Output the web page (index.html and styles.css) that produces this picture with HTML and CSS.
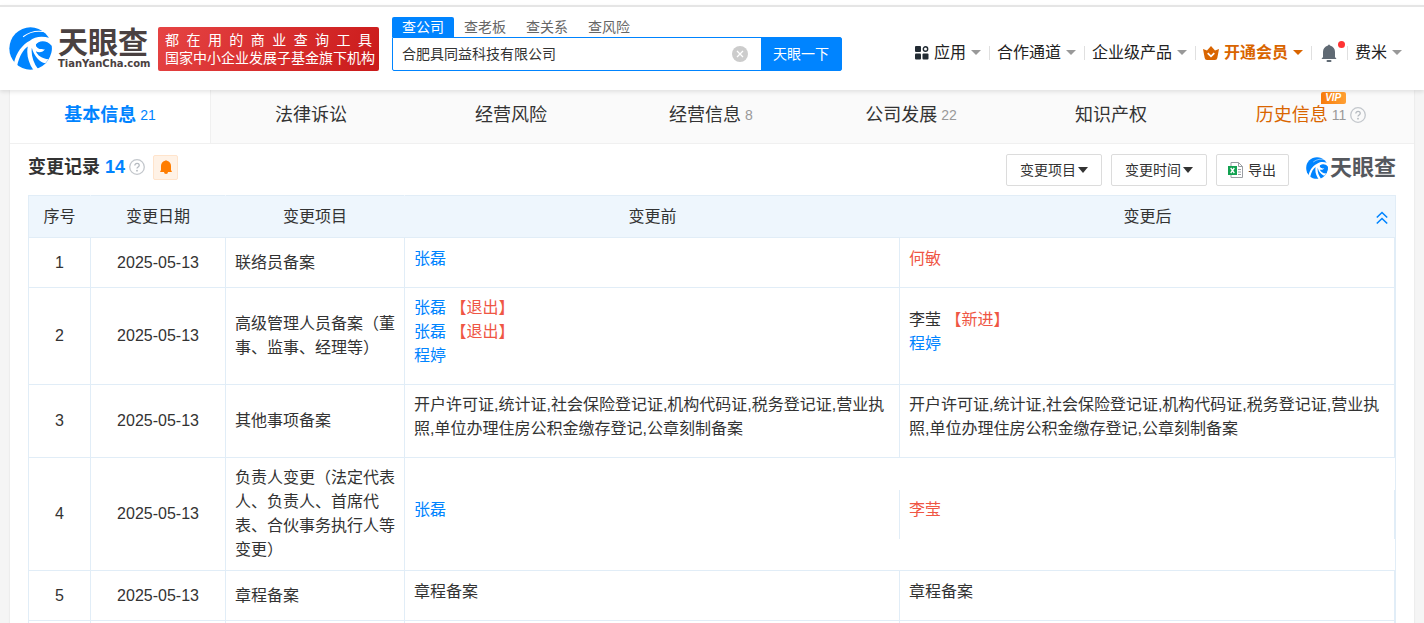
FILE: index.html
```html
<!DOCTYPE html>
<html lang="zh-CN">
<head>
    <meta charset="UTF-8">
    <title>天眼查</title>
    <link rel="stylesheet" href="styles.css">
</head>
<body>

<svg class="sprite" width="0" height="0" aria-hidden="true">
    <symbol id="swirl" viewBox="12 14 128 128">
        <circle cx="76" cy="78" r="63" fill="#0084ff"/>
        <path d="M54 43Q85 19 126 30" fill="none" stroke="#fff" stroke-width="3"/>
        <path d="M142 38L133 47C112 40 88 42 74 55C52 66 34 90 27 120L36 130C43 100 55 80 68 72C63 96 70 122 86 144L99 140C84 120 77 96 80 76C86 100 104 120 120 122L130 110C110 108 96 98 92 86C102 92 114 88 119 80C106 81 94 78 92 67C100 56 122 55 142 74Z" fill="#fff"/>
        <path d="M92 67C98 54 124 50 139 70Q140 84 137 92C126 90 119 88 119 80C106 81 94 78 92 67Z" fill="#0084ff"/>
    </symbol>
    <symbol id="help" viewBox="0 0 16 16">
        <circle cx="8" cy="8" r="7.3" fill="none" stroke="#c3c7cc" stroke-width="1.3"/>
        <path d="M5.8 6.5C5.8 3.6 10.3 3.7 10.2 6.4C10.2 7.9 8 8 8 9.6" fill="none" stroke="#b4b9bf" stroke-width="1.3"/>
        <circle cx="8" cy="11.7" r=".9" fill="#b4b9bf"/>
    </symbol>
</svg>

<header class="header">
    <a class="logo" href="#">
        <svg class="logo_mark"><use href="#swirl"/></svg>
        <span class="logo_text">
            <span class="logo_name">天眼查</span>
            <span class="logo_domain">TianYanCha.com</span>
        </span>
    </a>
    <div class="slogan">
        <div class="slogan_line">都 在 用 的 商 业 查 询 工 具</div>
        <div class="slogan_line">国家中小企业发展子基金旗下机构</div>
    </div>

    <form class="search">
        <div class="search-tabs">
            <button type="button" class="search-tabs_button active">查公司</button>
            <button type="button" class="search-tabs_button">查老板</button>
            <button type="button" class="search-tabs_button">查关系</button>
            <button type="button" class="search-tabs_button">查风险</button>
        </div>
        <div class="search-box">
            <input class="search-box_input" type="text" aria-label="搜索" value="合肥具同益科技有限公司">
            <button type="button" class="search-box_clear" aria-label="清空">
                <svg width="16" height="16" viewBox="0 0 16 16"><circle cx="8" cy="8" r="8" fill="#ccc"/><path d="M5 5l6 6M11 5l-6 6" stroke="#fff" stroke-width="1.3"/></svg>
            </button>
            <button type="submit" class="search-box_submit">天眼一下</button>
        </div>
    </form>

    <nav class="nav">
        <button class="nav_item">
            <svg width="14" height="14" viewBox="0 0 14 14" fill="#222b33"><rect x="0" y="0" width="6" height="6" rx="1"/><circle cx="10.5" cy="3" r="2.2" fill="none" stroke="#222b33" stroke-width="1.4"/><rect x="0" y="7.5" width="6" height="6" rx="1"/><rect x="7.5" y="7.5" width="6" height="6" rx="1"/></svg>
            应用<i class="caret"></i>
        </button>
        <button class="nav_item">合作通道<i class="caret"></i></button>
        <button class="nav_item">企业级产品<i class="caret"></i></button>
        <button class="nav_item nav_item-vip">
            <svg width="16" height="14" viewBox="0 0 16 14"><path d="M0 3L4 4.5L8 0L12 4.5L16 3L14.3 12Q14 14 12 14H4Q2 14 1.7 12Z" fill="#d96500"/><path d="M4.7 7.2L8 10.3L11.3 7.2" fill="none" stroke="#fff" stroke-width="1.8"/></svg>
            开通会员<i class="caret"></i>
        </button>
        <button class="nav_item nav_item-bell" aria-label="消息">
            <svg width="16" height="18" viewBox="0 0 16 18" fill="#606a74"><path d="M7 1.5Q8-.5 9 1.5Q14 3 14 8V13L15.5 15H.5L2 13V8Q2 3 7 1.5Z"/><rect x="5.5" y="16" width="5" height="2" rx="1"/></svg>
            <span class="dot"></span>
        </button>
        <button class="nav_item">费米<i class="caret"></i></button>
    </nav>
</header>

<main class="page">
    <nav class="tabs">
        <a class="tabs_item active" href="#">基本信息<span class="tabs_count">21</span></a>
        <a class="tabs_item" href="#">法律诉讼</a>
        <a class="tabs_item" href="#">经营风险</a>
        <a class="tabs_item" href="#">经营信息<span class="tabs_count">8</span></a>
        <a class="tabs_item" href="#">公司发展<span class="tabs_count">22</span></a>
        <a class="tabs_item" href="#">知识产权</a>
        <a class="tabs_item tabs_item-history" href="#">
            <span class="tabs_label">历史信息<span class="vip">VIP</span></span>
            <span class="tabs_count">11</span>
            <svg class="help"><use href="#help"/></svg>
        </a>
    </nav>

    <section class="records">
        <div class="toolbar">
            <div class="toolbar_heading">
                <h2 class="toolbar_title">变更记录 <span class="toolbar_count">14</span></h2>
                <svg class="help"><use href="#help"/></svg>
                <button class="remind" aria-label="订阅">
                    <svg width="12" height="14" viewBox="0 0 12 14" fill="#ff7d00"><path d="M5 .8Q6-.4 7 .8Q11 2 11 6V10L12 12H0L1 10V6Q1 2 5 .8Z"/><path d="M4 12H8Q8 14 6 14T4 12Z"/></svg>
                </button>
            </div>
            <div class="toolbar_actions">
                <label class="filter"><select class="filter_select" aria-label="变更项目"><option>变更项目</option></select></label>
                <label class="filter"><select class="filter_select" aria-label="变更时间"><option>变更时间</option></select></label>
                <button class="export">
                    <svg width="15" height="16" viewBox="0 0 15 16"><path d="M3 .5H10.5L14.5 4.5V15.5H3Z" fill="#fff" stroke="#9a9ea3"/><path d="M10.5 .5V4.5H14.5M10 7.5H13M10 10H13M10 12.5H13" fill="none" stroke="#9a9ea3"/><rect y="4" width="9" height="9" fill="#12a150"/><path d="M2.7 6L6.3 11M6.3 6L2.7 11" stroke="#fff" stroke-width="1.3"/></svg>
                    导出
                </button>
                <div class="brand">
                    <svg class="brand_mark"><use href="#swirl"/></svg>
                    <span class="brand_name">天眼查</span>
                </div>
            </div>
        </div>

        <table class="table">
            <colgroup>
                <col class="col-index">
                <col class="col-date">
                <col class="col-item">
                <col>
            </colgroup>
            <thead>
            <tr>
                <th>序号</th>
                <th>变更日期</th>
                <th>变更项目</th>
                <th>
                    <div class="change">
                        <div class="change_head">变更前</div>
                        <div class="change_head">变更后</div>
                    </div>
                    <button class="collapse" aria-label="收起">
                        <svg width="12" height="14" viewBox="0 0 12 14" fill="none" stroke="#0084ff" stroke-width="1.6"><path d="M.8 6.5L6 1.5L11.2 6.5M.8 12.5L6 7.5L11.2 12.5"/></svg>
                    </button>
                </th>
            </tr>
            </thead>
            <tbody>
            <tr>
                <td class="center">1</td>
                <td class="center">2025-05-13</td>
                <td>联络员备案</td>
                <td class="change-cell">
                    <div class="change">
                        <div class="change_side"><a href="#">张磊</a></div>
                        <div class="change_side"><a class="red" href="#">何敏</a></div>
                    </div>
                </td>
            </tr>
            <tr>
                <td class="center">2</td>
                <td class="center">2025-05-13</td>
                <td>高级管理人员备案（董事、监事、经理等）</td>
                <td class="change-cell">
                    <div class="change">
                        <div class="change_side">
                            <div><a href="#">张磊</a> <span class="red">【退出】</span></div>
                            <div><a href="#">张磊</a> <span class="red">【退出】</span></div>
                            <div><a href="#">程婷</a></div>
                        </div>
                        <div class="change_side">
                            <div>李莹 <span class="red">【新进】</span></div>
                            <div><a href="#">程婷</a></div>
                        </div>
                    </div>
                </td>
            </tr>
            <tr>
                <td class="center">3</td>
                <td class="center">2025-05-13</td>
                <td>其他事项备案</td>
                <td class="change-cell">
                    <div class="change">
                        <div class="change_side">开户许可证,统计证,社会保险登记证,机构代码证,税务登记证,营业执照,单位办理住房公积金缴存登记,公章刻制备案</div>
                        <div class="change_side">开户许可证,统计证,社会保险登记证,机构代码证,税务登记证,营业执照,单位办理住房公积金缴存登记,公章刻制备案</div>
                    </div>
                </td>
            </tr>
            <tr>
                <td class="center">4</td>
                <td class="center">2025-05-13</td>
                <td>负责人变更（法定代表人、负责人、首席代表、合伙事务执行人等变更）</td>
                <td class="change-cell">
                    <div class="change">
                        <div class="change_side"><a href="#">张磊</a></div>
                        <div class="change_side"><a class="red" href="#">李莹</a></div>
                    </div>
                </td>
            </tr>
            <tr>
                <td class="center">5</td>
                <td class="center">2025-05-13</td>
                <td>章程备案</td>
                <td class="change-cell">
                    <div class="change">
                        <div class="change_side">章程备案</div>
                        <div class="change_side">章程备案</div>
                    </div>
                </td>
            </tr>
            <tr>
                <td></td>
                <td></td>
                <td></td>
                <td class="change-cell">
                    <div class="change">
                        <div class="change_side"></div>
                        <div class="change_side"></div>
                    </div>
                </td>
            </tr>
            </tbody>
        </table>
    </section>
</main>

</body>
</html>
```
FILE: styles.css
```css
* {
    box-sizing: border-box;
}

body {
    margin: 0;
    height: 100vh;
    padding-top: 5px;
    overflow: hidden;
    background: linear-gradient(#fff 5px, #f5f5f5 5px);
    color: #333;
    font-family: "Liberation Sans", "Noto Sans CJK SC", sans-serif;
    font-size: 16px;
    line-height: 24px;
}

a {
    color: #0084ff;
    text-decoration: none;
}

button,
input,
select {
    margin: 0;
    padding: 0;
    border: 0;
    background: none;
    color: inherit;
    font: inherit;
}

svg {
    display: block;
    flex: none;
}

.sprite {
    position: absolute;
}

.red {
    color: #ef5644;
}

/* header */
.header {
    position: relative;
    display: flex;
    align-items: center;
    height: 85px;
    padding: 0 14px 0 9px;
    background: #fff;
    border-top: 2px solid #e5e5e5;
    box-shadow: 0 2px 4px rgba(0, 0, 0, 0.1);
}

.logo {
    display: flex;
    align-items: center;
    gap: 6px;
    width: 149px;
    color: #4a4141;
}

.logo_mark {
    width: 43px;
    height: 43px;
}

.logo_text {
    display: flex;
    flex-direction: column;
}

.logo_name {
    font-size: 30px;
    font-weight: 700;
    line-height: 30px;
}

.logo_domain {
    font-family: "DejaVu Sans", sans-serif;
    font-size: 10px;
    font-weight: 700;
    line-height: 12px;
}

.slogan {
    width: 221px;
    padding: 4px 5px;
    border-radius: 2px;
    background: linear-gradient(120deg, #e64444, #ca1a1a);
    color: #fff;
    font-size: 14px;
    line-height: 18px;
}

.slogan_line {
    padding: 0 2px;
    text-align: justify;
    text-align-last: justify;
    white-space: nowrap;
}

.search {
    width: 450px;
    margin: 0 0 10px 13px;
    font-size: 14px;
}

.search-tabs {
    display: flex;
}

.search-tabs_button {
    width: 62px;
    line-height: 20px;
    color: #666;
}

.search-tabs_button.active {
    border-radius: 2px 2px 0 0;
    background: #0084ff;
    color: #fff;
}

.search-box {
    display: flex;
    align-items: center;
    height: 34px;
    border: 1px solid #0084ff;
    border-radius: 0 2px 2px 2px;
}

.search-box_input {
    flex: 1;
    min-width: 0;
    padding: 0 9px;
    outline: none;
}

.search-box_clear {
    margin-right: 13px;
}

.search-box_submit {
    align-self: stretch;
    width: 80px;
    background: #0084ff;
    color: #fff;
}

.nav {
    display: flex;
    align-items: center;
    margin-left: auto;
    padding-top: 8px;
    color: #222;
}

.nav_item {
    position: relative;
    display: flex;
    align-items: center;
    gap: 5px;
    padding: 0 8px;
    white-space: nowrap;
}

.nav_item + .nav_item::before {
    content: "";
    position: absolute;
    left: 0;
    top: 5px;
    height: 14px;
    border-left: 1px solid #e0e0e0;
}

.nav_item-vip {
    color: #d96500;
    font-weight: 700;
}

.caret {
    border: 5px solid transparent;
    border-top-color: #999;
    border-bottom: 0;
}

.nav_item-vip .caret {
    border-top-color: #d96500;
}

.nav_item-bell {
    height: 24px;
    padding: 0 10px;
}

.dot {
    position: absolute;
    top: 0;
    right: 2px;
    width: 7px;
    height: 7px;
    border-radius: 50%;
    background: #ff3333;
}

/* page */
.page {
    margin: 0 10px;
    background: #fff;
    box-shadow: 0 0 2px rgba(0, 0, 0, 0.1);
}

.tabs {
    display: flex;
    height: 54px;
    padding-right: 3px;
    background: #fafafa;
    border-bottom: 1px solid #f0f0f0;
    font-size: 18px;
}

.tabs_item {
    display: flex;
    flex: 1 1 0;
    align-items: center;
    justify-content: center;
    gap: 4px;
    padding-bottom: 4px;
    color: #333;
}

.tabs_item.active {
    background: #fff;
    border-right: 1px solid #f0f0f0;
    color: #0084ff;
    font-weight: 700;
}

.tabs_count {
    color: #999;
    font-size: 14px;
    font-weight: 400;
}

.tabs_item.active .tabs_count {
    color: #0084ff;
}

.tabs_item-history {
    color: #d96500;
}

.tabs_label {
    position: relative;
}

.vip {
    position: absolute;
    top: -11px;
    right: -18px;
    width: 25px;
    border-radius: 2px 2px 2px 0;
    background: linear-gradient(90deg, #f77b0b, #ffa033);
    color: #fff;
    font-size: 10px;
    font-style: italic;
    font-weight: 700;
    line-height: 12px;
    text-align: center;
}

.help {
    width: 16px;
    height: 16px;
}

.records {
    padding: 10px 18px 0;
}

.toolbar {
    display: flex;
    justify-content: space-between;
    height: 32px;
    margin-bottom: 9px;
}

.toolbar_heading {
    display: flex;
    align-items: center;
    height: 26px;
}

.toolbar_title {
    margin: 0 4px 0 0;
    font-size: 18px;
}

.toolbar_count {
    color: #0084ff;
}

.remind {
    display: flex;
    align-items: center;
    justify-content: center;
    width: 25px;
    height: 25px;
    margin-left: 8px;
    border: 1px solid #ffe4cc;
    border-radius: 2px;
    background: #fff2e6;
}

.toolbar_actions {
    display: flex;
    gap: 9px;
    font-size: 14px;
}

.filter,
.export {
    display: flex;
    align-items: center;
    height: 32px;
    padding: 0 13px;
    border: 1px solid #dcdcdc;
    border-radius: 2px;
}

.filter::after {
    content: "";
    margin-left: 2px;
    border: 5px solid transparent;
    border-top: 6px solid #333;
    border-bottom: 0;
}

.filter_select {
    appearance: none;
}

.export {
    gap: 5px;
    padding: 0 12px 0 11px;
}

.brand {
    display: flex;
    align-items: center;
    gap: 2px;
    height: 28px;
    margin-left: 8px;
    color: #55585e;
}

.brand_mark {
    width: 22px;
    height: 22px;
}

.brand_name {
    font-size: 22px;
    font-weight: 700;
}

/* records table */
.table {
    width: 100%;
    border-collapse: collapse;
    table-layout: fixed;
}

.table th,
.table td {
    border: 1px solid #e1edf7;
}

.table th {
    position: relative;
    height: 42px;
    padding: 0;
    background: #eef6fd;
    font-weight: 400;
}

.table th + th {
    border-left-color: #eef6fd;
}

.table th:not(:last-child) {
    border-right-color: #eef6fd;
}

.table td {
    height: 50px;
    padding: 8px 9px;
}

.table td.change-cell {
    padding: 0;
}

.center {
    text-align: center;
}

.col-index {
    width: 62px;
}

.col-date {
    width: 135px;
}

.col-item {
    width: 179px;
}

.change {
    display: flex;
}

.change_head {
    flex: 1;
}

.change_side {
    display: flex;
    flex: 1;
    flex-direction: column;
    justify-content: center;
    min-height: 49px;
    padding: 8px 9px 16px;
    border-right: 1px solid #e1edf7;
}

.collapse {
    position: absolute;
    top: 15px;
    right: 7px;
}
```
